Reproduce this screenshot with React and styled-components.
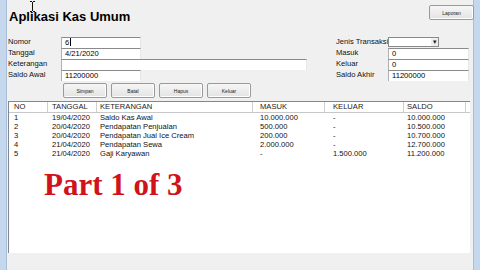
import React from 'react'
import styled, { createGlobalStyle } from 'styled-components';

const GlobalStyle = createGlobalStyle`
    html, body { margin: 0; padding: 0; }
    body { font-family: "Liberation Sans", Arial, sans-serif; }
`;

const rows = [
    ['1', '19/04/2020', 'Saldo Kas Awal', '10.000.000', '-', '10.000.000'],
    ['2', '20/04/2020', 'Pendapatan Penjualan', '500.000', '-', '10.500.000'],
    ['3', '20/04/2020', 'Pendapatan Jual Ice Cream', '200.000', '-', '10.700.000'],
    ['4', '21/04/2020', 'Pendapatan Sewa', '2.000.000', '-', '12.700.000'],
    ['5', '21/04/2020', 'Gaji Karyawan', '-', '1.500.000', '11.200.000'],
];

const columns = [
    { title: 'NO', width: 39, pad: 5 },
    { title: 'TANGGAL', width: 49, pad: 4 },
    { title: 'KETERANGAN', width: 156, pad: 3 },
    { title: 'MASUK', width: 72, pad: 7 },
    { title: 'KELUAR', width: 79, pad: 8 },
    { title: 'SALDO', width: 62, pad: 3 },
];

function App() {
  return (
    <Window>
        <GlobalStyle />
        <Cursor width="7" height="11" viewBox="0 0 7 11">
            <path d="M1 0.5h2M4 0.5h2M3.5 1v9M1 10.5h2M4 10.5h2" stroke="#111" strokeWidth="1" fill="none" />
        </Cursor>
        <Content>
            <TopBar>
                <Title>Aplikasi Kas Umum</Title>
                <SmallButton $width={45}>Laporan</SmallButton>
            </TopBar>
            <FormRow>
                <FieldGrid $label={53}>
                    <Label>Nomor</Label>
                    <Field $width={80}>6<Caret /></Field>
                    <Label>Tanggal</Label>
                    <Field $width={80}>4/21/2020</Field>
                    <Label>Keterangan</Label>
                    <Field $width={246}></Field>
                    <Label>Saldo Awal</Label>
                    <Field $width={80}>11200000</Field>
                </FieldGrid>
                <FieldGrid $label={52}>
                    <Label>Jenis Transaksi</Label>
                    <Select>
                        <SelectArrow>▾</SelectArrow>
                    </Select>
                    <Label>Masuk</Label>
                    <Field $width={81}>0</Field>
                    <Label>Keluar</Label>
                    <Field $width={81}>0</Field>
                    <Label>Saldo Akhir</Label>
                    <Field $width={81}>11200000</Field>
                </FieldGrid>
            </FormRow>
            <ButtonRow>
                <SmallButton $width={44}>Simpan</SmallButton>
                <SmallButton $width={44}>Batal</SmallButton>
                <SmallButton $width={44}>Hapus</SmallButton>
                <SmallButton $width={44}>Keluar</SmallButton>
            </ButtonRow>
            <ListView>
                <HeaderRow>
                    {columns.map((c) => (
                        <HeaderCell key={c.title} $width={c.width} $pad={c.pad}>{c.title}</HeaderCell>
                    ))}
                </HeaderRow>
                {rows.map((r) => (
                    <DataRow key={r[0]}>
                        {r.map((v, i) => (
                            <Cell key={i} $width={columns[i].width} $pad={columns[i].pad}>{v}</Cell>
                        ))}
                    </DataRow>
                ))}
                <Banner>Part 1 of 3</Banner>
            </ListView>
        </Content>
    </Window>
  )
}

export default App;

const Window = styled.div`
    position: relative;
    width: 480px;
    height: 270px;
    box-sizing: border-box;
    background: #f0f0f0;
    border-left: 6px solid #c4d7ec;
    border-right: 6px solid #c4d7ec;
    box-shadow: inset 1px 0 0 #a9bfd9, inset -1px 0 0 #a9bfd9;
    overflow: hidden;
`;

const Cursor = styled.svg`
    position: absolute;
    left: 23px;
    top: 1px;
`;

const Content = styled.div`
    padding: 5px 0 0 2px;
    display: flex;
    flex-direction: column;
`;

const TopBar = styled.div`
    display: flex;
    justify-content: space-between;
    align-items: flex-start;
    height: 32px;
`;

const Title = styled.h1`
    margin: 4px 0 0 1px;
    font-size: 13px;
    font-weight: bold;
    color: #000;
    line-height: 16px;
`;

const SmallButton = styled.button`
    width: ${(p) => p.$width}px;
    height: 15px;
    padding: 0;
    box-sizing: border-box;
    background: linear-gradient(#f6f6f6, #e3e3e3);
    border: 1px solid #9a9a9a;
    border-radius: 2px;
    font-family: "Liberation Sans", Arial, sans-serif;
    font-size: 5px;
    color: #222;
    box-shadow: inset -1px -1px 0 #fff;
`;

const FormRow = styled.div`
    display: flex;
    justify-content: space-between;
    padding-right: 5px;
`;

const FieldGrid = styled.div`
    display: grid;
    grid-template-columns: ${(p) => p.$label}px auto;
    grid-auto-rows: 11px;
    align-items: start;
`;

const Label = styled.div`
    font-size: 7.6px;
    line-height: 10px;
    color: #111;
    white-space: nowrap;
`;

const Field = styled.div`
    position: relative;
    width: ${(p) => p.$width}px;
    height: 11px;
    box-sizing: border-box;
    background: #fff;
    border-top: 1px solid #8a8a8a;
    border-left: 1px solid #b0b0b0;
    border-right: 1px solid #e6e6e6;
    padding-left: 3px;
    font-size: 7.6px;
    line-height: 10px;
    color: #000;
`;

const Caret = styled.span`
    display: inline-block;
    width: 1px;
    height: 8px;
    margin-left: 1px;
    background: #000;
    vertical-align: -1px;
`;

const Select = styled.div`
    position: relative;
    width: 51px;
    height: 10px;
    box-sizing: border-box;
    background: #fff;
    border: 1px solid #8a8a8a;
`;

const SelectArrow = styled.span`
    position: absolute;
    right: 0;
    top: 0;
    width: 7px;
    height: 8px;
    background: #eee;
    font-size: 7px;
    line-height: 8px;
    text-align: center;
    color: #222;
`;

const ButtonRow = styled.div`
    display: flex;
    gap: 4px;
    margin: 2px 0 0 55px;
`;

const ListView = styled.div`
    margin-top: 3px;
    margin-right: 4px;
    height: 152px;
    box-sizing: border-box;
    background: #fff;
    border-left: 1px solid #828790;
    border-top: 1px solid #828790;
    display: flex;
    flex-direction: column;
`;

const HeaderRow = styled.div`
    display: flex;
    height: 10px;
    border-bottom: 1px solid #c8c8c8;
`;

const HeaderCell = styled.div`
    width: ${(p) => p.$width}px;
    box-sizing: border-box;
    padding-left: ${(p) => p.$pad}px;
    border-right: 1px solid #cfcfcf;
    font-size: 7.6px;
    line-height: 10px;
    color: #222;
`;

const DataRow = styled.div`
    display: flex;
    height: 9px;
`;

const Cell = styled.div`
    width: ${(p) => p.$width}px;
    box-sizing: border-box;
    padding-left: ${(p) => p.$pad}px;
    font-size: 7.6px;
    line-height: 9px;
    color: #111;
    white-space: nowrap;
`;

const Banner = styled.div`
    margin: 10px 0 0 35px;
    font-family: "Liberation Serif", "Times New Roman", serif;
    font-weight: bold;
    font-size: 31px;
    line-height: 34px;
    color: #d0121b;
`;
